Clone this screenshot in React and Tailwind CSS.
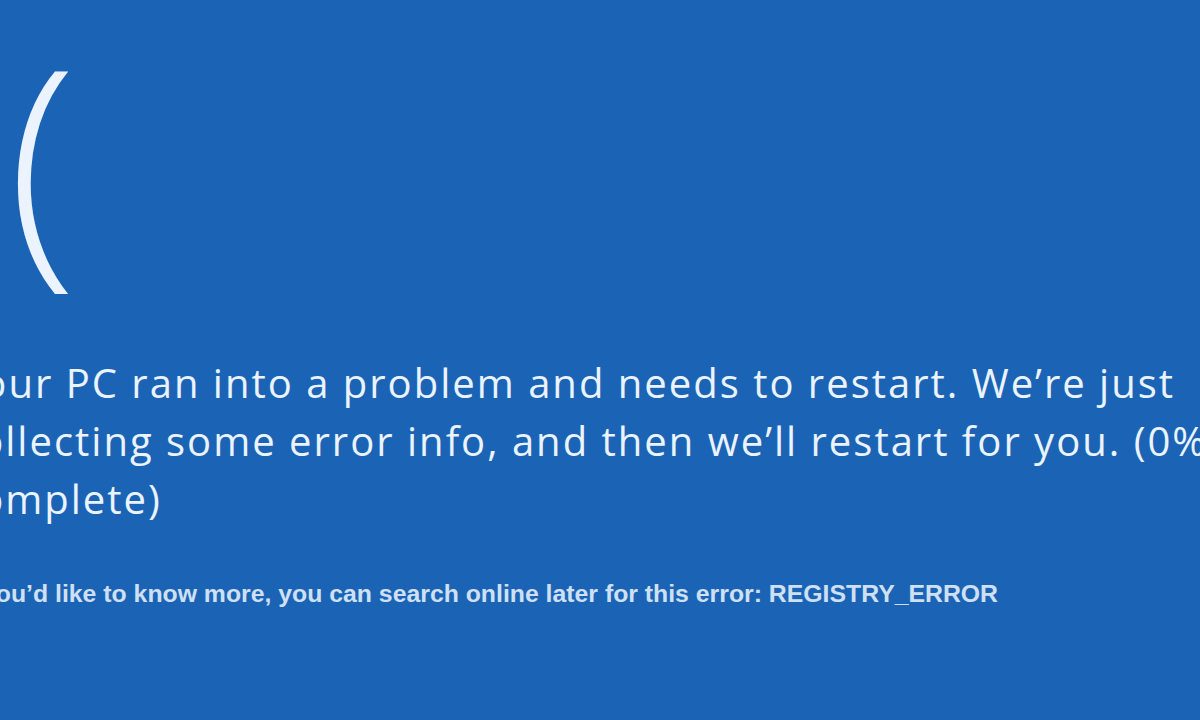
import React from 'react';

export default function App() {
  return (
    <div className="w-[1200px] h-[720px] overflow-hidden bg-[#1b64b5] text-[#eaf3fe]" style={{ fontFamily: '"Open Sans", "Noto Sans", sans-serif' }}>
      <div className="pt-[29px]">
        <div className="h-[300px] -ml-[53px] flex">
          <span className="text-[254px] leading-none font-light whitespace-nowrap">:(</span>
        </div>
        <div className="-ml-[42px] mt-[25px] text-[40px] leading-[58px] tracking-[2px] whitespace-nowrap">
          <div>Your PC ran into a problem and needs to restart. We’re just</div>
          <div>collecting some error info, and then we’ll restart for you. (0%</div>
          <div>complete)</div>
        </div>
        <div className="-ml-[40px] mt-[47px] text-[24.8px] font-bold text-[#cfe0f4] whitespace-nowrap" style={{ fontFamily: '"Liberation Sans", Arial, sans-serif' }}>
          If you’d like to know more, you can search online later for this error: REGISTRY_ERROR
        </div>
      </div>
    </div>
  );
}
